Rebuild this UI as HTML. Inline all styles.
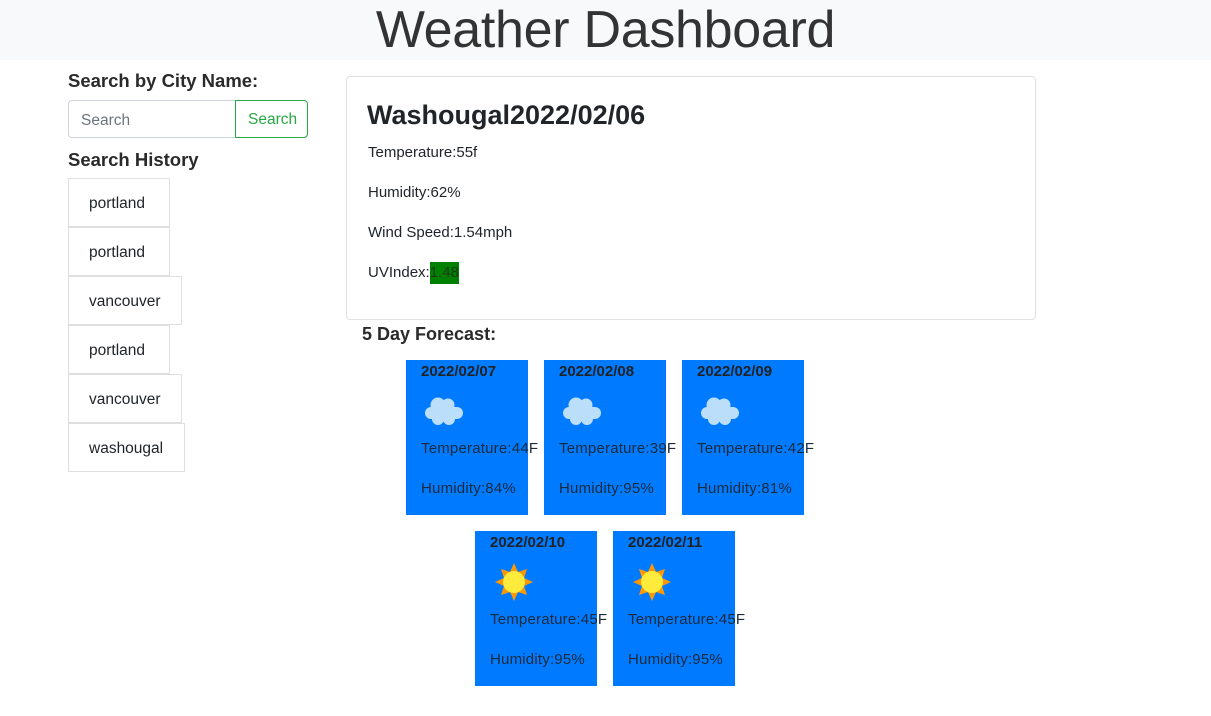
<!DOCTYPE html>
<html><head><style>
*{margin:0;padding:0;box-sizing:border-box}
body{width:1211px;height:716px;background:#fff;font-family:"Liberation Sans",sans-serif;color:#212529;position:relative;overflow:hidden}
.a{position:absolute;white-space:nowrap}
.hdr{left:0;top:0;width:1211px;height:60px;background:#f8f9fa}
.hdr div{position:absolute;left:0;width:1211px;top:0px;text-align:center;font-size:52px;font-weight:300;color:#333;letter-spacing:-0.3px}
h5{font-size:18.5px;font-weight:bold;color:#2a2a2a}
.hist{left:68px;height:49px;border:1px solid #dfdfdf;font-size:15.5px;line-height:49px;padding-left:20px}
.main{left:346px;top:76px;width:690px;height:244px;border:1px solid #dee2e6;border-radius:4px}
.main p{position:absolute;left:21px;font-size:15px}
.fc{width:122px;height:155px;background:#007bff;font-size:15px;color:#1a2a3a}
.fc .d{position:absolute;left:15px;top:3px;font-weight:bold;font-size:15px;color:#222}
.fc .t{position:absolute;left:15px;top:80px;letter-spacing:0.2px}
.fc .h{position:absolute;left:15px;top:120px;letter-spacing:0.2px}
.fc svg{position:absolute;left:17px;top:35px}
</style></head><body>
<div class="a hdr"><div>Weather Dashboard</div></div>
<h5 class="a" style="left:68px;top:70px">Search by City Name:</h5>
<div class="a" style="left:68px;top:100px;width:168px;height:38px;border:1px solid #ced4da;border-radius:4px 0 0 4px;font-size:15.5px;color:#6c757d;padding:11px 12px">Search</div>
<div class="a" style="left:235px;top:100px;width:73px;height:38px;border:1px solid #28a745;border-radius:0 4px 4px 0;font-size:15.5px;color:#28a745;padding:10px 12px">Search</div>
<h5 class="a" style="left:68px;top:149px">Search History</h5>
<div class="a hist" style="top:178px;width:102px">portland</div>
<div class="a hist" style="top:227px;width:102px">portland</div>
<div class="a hist" style="top:276px;width:114px">vancouver</div>
<div class="a hist" style="top:325px;width:102px">portland</div>
<div class="a hist" style="top:374px;width:114px">vancouver</div>
<div class="a hist" style="top:423px;width:117px">washougal</div>
<div class="a main">
<div class="a" style="left:20px;top:23px;font-size:27px;font-weight:bold">Washougal2022/02/06</div>
<p style="top:67px">Temperature:55f</p>
<p style="top:107px">Humidity:62%</p>
<p style="top:147px">Wind Speed:1.54mph</p>
<p style="top:187px">UVIndex:<span style="background:#008000;color:#1a3a1a;padding:2px 0 3px">1.48</span></p>
</div>
<h5 class="a" style="left:362px;top:324px;font-size:18px">5 Day Forecast:</h5>
<div class="a fc" style="left:406px;top:360px"><div class="d">2022/02/07</div><svg width="44" height="34" viewBox="0 0 44 34"><g fill="#bbdefb"><circle cx="15" cy="10" r="7.5"/><circle cx="25" cy="10" r="6.5"/><circle cx="8" cy="18" r="6"/><circle cx="34" cy="18" r="6"/><circle cx="15" cy="24" r="6"/><circle cx="26" cy="24" r="6"/><rect x="8" y="12" width="26" height="12"/></g></svg><div class="t">Temperature:44F</div><div class="h">Humidity:84%</div></div>
<div class="a fc" style="left:544px;top:360px"><div class="d">2022/02/08</div><svg width="44" height="34" viewBox="0 0 44 34"><g fill="#bbdefb"><circle cx="15" cy="10" r="7.5"/><circle cx="25" cy="10" r="6.5"/><circle cx="8" cy="18" r="6"/><circle cx="34" cy="18" r="6"/><circle cx="15" cy="24" r="6"/><circle cx="26" cy="24" r="6"/><rect x="8" y="12" width="26" height="12"/></g></svg><div class="t">Temperature:39F</div><div class="h">Humidity:95%</div></div>
<div class="a fc" style="left:682px;top:360px"><div class="d">2022/02/09</div><svg width="44" height="34" viewBox="0 0 44 34"><g fill="#bbdefb"><circle cx="15" cy="10" r="7.5"/><circle cx="25" cy="10" r="6.5"/><circle cx="8" cy="18" r="6"/><circle cx="34" cy="18" r="6"/><circle cx="15" cy="24" r="6"/><circle cx="26" cy="24" r="6"/><rect x="8" y="12" width="26" height="12"/></g></svg><div class="t">Temperature:42F</div><div class="h">Humidity:81%</div></div>
<div class="a fc" style="left:475px;top:531px"><div class="d">2022/02/10</div><svg width="40" height="40" viewBox="0 0 40 40" style="top:31px;left:19px"><polygon fill="#ff9800" points="20,1 24,10 33,7 30,16 39,20 30,24 33,33 24,30 20,39 16,30 7,33 10,24 1,20 10,16 7,7 16,10"/><circle cx="20" cy="20" r="11" fill="#ffeb3b"/></svg><div class="t">Temperature:45F</div><div class="h">Humidity:95%</div></div>
<div class="a fc" style="left:613px;top:531px"><div class="d">2022/02/11</div><svg width="40" height="40" viewBox="0 0 40 40" style="top:31px;left:19px"><polygon fill="#ff9800" points="20,1 24,10 33,7 30,16 39,20 30,24 33,33 24,30 20,39 16,30 7,33 10,24 1,20 10,16 7,7 16,10"/><circle cx="20" cy="20" r="11" fill="#ffeb3b"/></svg><div class="t">Temperature:45F</div><div class="h">Humidity:95%</div></div>
</body></html>
